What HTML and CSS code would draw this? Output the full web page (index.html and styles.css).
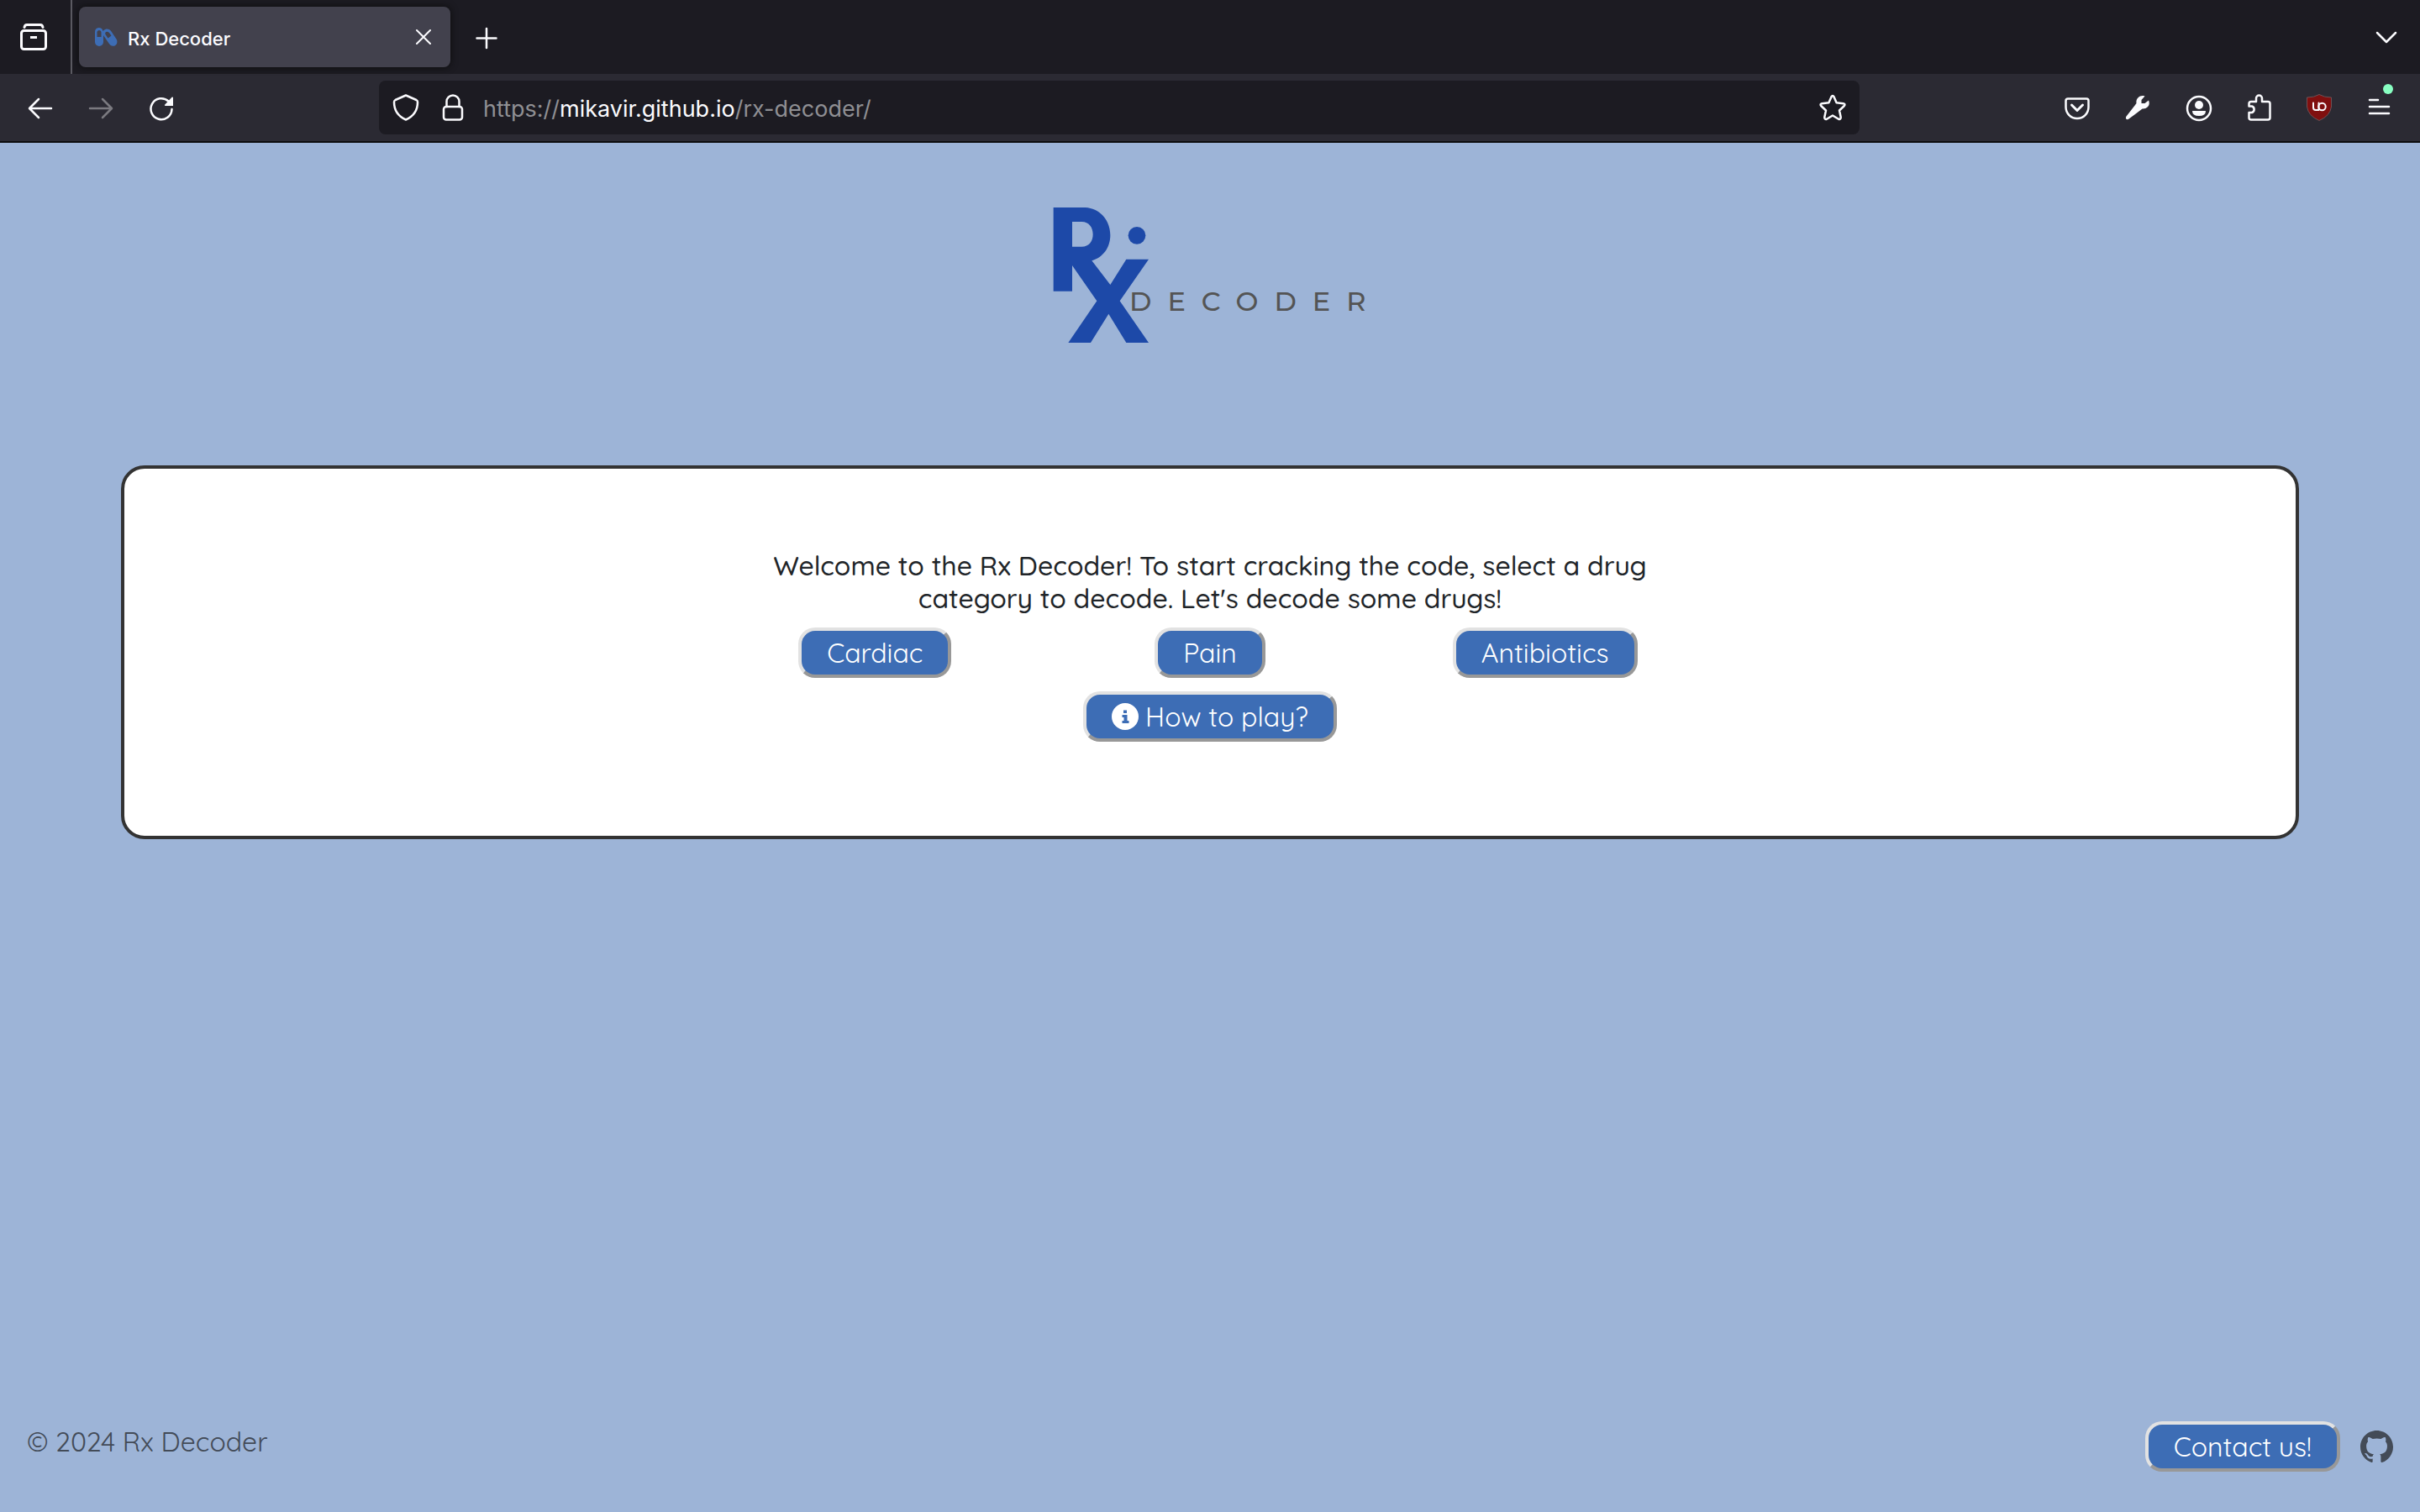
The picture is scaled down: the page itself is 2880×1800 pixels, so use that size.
FILE: index.html
```html
<!DOCTYPE html>
<html lang="en">
<head>
<meta charset="utf-8">
<meta name="viewport" content="width=device-width, initial-scale=1">
<title>Rx Decoder</title>
<link rel="stylesheet" href="styles.css">
</head>
<body>
<div class="browser">
  <div class="tabbar">
    <button class="tool recent" aria-label="Recent browsing">
      <svg class="icon" viewBox="0 0 32 32"><path d="M5 4.5Q5.500 1.500 8 1.500H24Q26.500 1.500 27 4.500" class="line heavy"/><rect x="1.500" y="8.500" width="29" height="22" rx="3" class="line heavy"/><path d="M12 16.500H20" class="line heavy butt"/></svg>
    </button>
    <div class="tab">
      <svg class="favicon" viewBox="0 0 28 24"><path fill-rule="evenodd" d="M5.500 1A5 5 0 0 1 10.500 5L11.500 4C14 1.500 18.500 2 20.500 5.500L26.500 14.500C28.500 18 27 21.500 24.500 22.500C21.500 23.500 19 22 17.500 19.500L11 10V18A5 5 0 0 1 1 18V6A5 5 0 0 1 5.500 1ZM3.500 6.500V12H8.500V6.500C8.500 3 3.500 3 3.500 6.500ZM13.500 9L16.500 13.500L20.500 10.500L18 7C15.500 4.500 12 6.500 13.500 9Z"/></svg>
      <span class="tab-title">Rx Decoder</span>
      <button class="close" aria-label="Close tab"><svg viewBox="0 0 20 20"><path d="M2 2L18 18M18 2L2 18" class="line"/></svg></button>
    </div>
    <button class="tool" aria-label="New tab"><svg class="icon" viewBox="0 0 32 32"><path d="M15 6V29M3.500 17.500H26.500" class="line thick"/></svg></button>
    <button class="tool list-tabs" aria-label="List all tabs"><svg class="icon" viewBox="0 0 32 32"><path d="M5 11L16 22L27 11" class="line thick"/></svg></button>
  </div>
  <div class="navbar">
    <div class="nav-left">
      <button class="tool" aria-label="Back"><svg class="icon" viewBox="0 0 32 32"><path d="M29 17H4M14 6L3 17L14 28" class="line thick"/></svg></button>
      <button class="tool" aria-label="Forward" disabled><svg class="icon" viewBox="0 0 32 32"><path d="M3 17H28M18 6L29 17L18 28" class="line thick"/></svg></button>
      <button class="tool" aria-label="Reload"><svg class="icon" viewBox="0 0 32 32"><path d="M28.500 18A12.500 12.500 0 1 1 24.500 8.500" class="line thick"/><path d="M30 4V14H20.500Q19.500 13.500 20.300 12.500L28.500 3.800Q29.500 3 30 4Z" class="solid"/></svg></button>
    </div>
    <div class="urlbar">
      <svg class="icon" viewBox="0 0 32 32"><path d="M16 1.500L28.500 7Q30 7.800 30 9.500C30 19 25 26.500 16 30.500C7 26.500 2 19 2 9.500Q2 7.800 3.500 7Z" class="line thick"/></svg>
      <svg class="icon" viewBox="0 0 32 32"><rect x="5" y="15" width="22" height="15.500" rx="3" class="line thick"/><path d="M8.500 15V9A7.500 7.500 0 0 1 23.500 9V15" class="line thick"/></svg>
      <div class="url" role="textbox" aria-label="Address" contenteditable="true" spellcheck="false">https://<span class="host">mikavir.github.io</span>/rx-decoder/</div>
      <button class="star" aria-label="Bookmark this page"><svg class="icon" viewBox="0 0 32 32"><path d="M14.600 3Q16 .8 17.400 3L20.600 10.300L28.800 11.200Q31.500 11.800 29.800 14L24 19.500L25.700 27.500Q25.800 30.500 23 29.800L16 25.500L9 29.800Q6.200 30.500 6.300 27.500L8 19.500L2.200 14Q.5 11.800 3.200 11.200L11.400 10.300Z" class="line thick"/></svg></button>
    </div>
    <div class="nav-right">
      <button class="tool" aria-label="Save to Pocket"><svg class="icon" viewBox="0 0 32 32"><path d="M5 5.500H27Q29.500 5.500 29.500 8V15.500A13.500 13.500 0 0 1 2.500 15.500V8Q2.500 5.500 5 5.500Z" class="line thick"/><path d="M9.500 13L16 19.500L22.500 13" class="line heavy"/></svg></button>
      <button class="tool" aria-label="Developer tools"><svg class="icon" viewBox="0 0 32 32"><path d="M24.500 2.500L20.500 7V11H24.500L29 7.500C31.500 13 27.500 18 21.500 17.500L5.500 29.500C3 31.500 .8 29 2.500 26.500L14.500 11C13.500 5 19 .5 24.500 2.500Z" class="solid"/></svg></button>
      <button class="tool" aria-label="Account"><svg class="icon" viewBox="0 0 32 32"><circle cx="17" cy="17" r="14" class="line thick"/><circle cx="17" cy="13" r="5" class="solid"/><path d="M9 20H25Q25 26 17 26Q9 26 9 20Z" class="solid"/></svg></button>
      <button class="tool" aria-label="Extensions"><svg class="icon" viewBox="0 0 32 32"><path d="M13 9V5A3.500 3.500 0 0 1 20 5V9H27Q29.500 9 29.500 11.500V28Q29.500 30.500 27 30.500H7Q4.500 30.500 4.500 28V22H8A4 4 0 0 0 8 14.500H4.500V11.500Q4.500 9 7 9Z" class="line thick"/></svg></button>
      <button class="tool" aria-label="uBlock Origin"><svg class="icon" viewBox="0 0 32 32"><path d="M16 .5Q22 4 30.500 4V15Q29 26 16 31.500Q3 26 1.500 15V4Q10 4 16 .5Z" class="ublock"/><path d="M9 10.500V16Q9 19 12 19H15.500V10.500" class="line"/><circle cx="19.500" cy="15" r="4.200" class="line"/></svg></button>
      <button class="tool menu" aria-label="Open application menu"><svg class="icon" viewBox="0 0 32 32"><path d="M4 7H14M4 15H27M4 23H27" class="line thick"/></svg><span class="badge"></span></button>
    </div>
  </div>
</div>
<header class="site-header">
  <a href="#" class="logo" aria-label="Rx Decoder">
    <svg viewBox="0 0 440 210"><g transform="scale(.33333)"><path class="mark" fill-rule="evenodd" d="M101 81H215C270 84 304 130 304 180C304 225 277 260 238 271L304 357L361 266H441L338 415L441 564H361L298 461L234 564H154L256 415L168 288V380H101ZM168 132H202C228 132 242 152 242 177C242 202 228 221 202 221H168Z"/><circle class="mark" cx="399" cy="181" r="31"/></g><text x="124" y="150" class="wordmark">DECODER</text></svg>
  </a>
</header>
<main class="card">
  <div class="content">
    <p class="intro">Welcome to the Rx Decoder! To start cracking the code, select a drug category to decode. Let's decode some drugs!</p>
    <div class="categories">
      <button class="btn">Cardiac</button>
      <button class="btn">Pain</button>
      <button class="btn">Antibiotics</button>
    </div>
    <button class="btn help"><svg class="info" viewBox="0 0 32 32"><path fill-rule="evenodd" d="M16 0A16 16 0 1 1 16 32A16 16 0 0 1 16 0ZM14 8.500V12H18V8.500ZM12.500 14V17H14.500V21H12.500V24H20.500V21H18.500V14Z"/></svg>How to play?</button>
  </div>
</main>
<footer class="site-footer">
  <p class="copyright">© 2024 Rx Decoder</p>
  <button class="btn">Contact us!</button>
  <a href="#" class="github" aria-label="GitHub"><svg viewBox="0 0 16 16"><path d="M8 0C3.580 0 0 3.580 0 8c0 3.540 2.290 6.530 5.470 7.590.4.070.55-.17.55-.38 0-.19-.01-.82-.01-1.490-2.010.37-2.530-.49-2.690-.94-.09-.23-.48-.94-.82-1.130-.28-.15-.68-.52-.01-.53.63-.01 1.080.58 1.230.82.72 1.210 1.870.87 2.330.66.07-.52.28-.87.51-1.070-1.780-.2-3.640-.89-3.640-3.950 0-.87.31-1.590.82-2.150-.08-.2-.36-1.020.08-2.120 0 0 .67-.21 2.200.82.64-.18 1.320-.27 2-.27s1.360.09 2 .27c1.530-1.040 2.200-.82 2.200-.82.44 1.100.16 1.920.08 2.120.51.56.82 1.270.82 2.150 0 3.070-1.870 3.750-3.650 3.950.29.25.54.73.54 1.480 0 1.070-.01 1.930-.01 2.200 0 .21.15.46.55.38A8.010 8.010 0 0 0 16 8c0-4.420-3.580-8-8-8z"/></svg></a>
</footer>
</body>
</html>
```
FILE: styles.css
```css
* {
  box-sizing: border-box;
}

body {
  margin: 0;
  min-height: 100vh;
  display: flex;
  flex-direction: column;
  background: #9db4d7;
  color: #212529;
  font-family: Quicksand, Lato, sans-serif;
  font-size: 32px;
  line-height: 39px;
}

button {
  font: inherit;
  cursor: pointer;
}

svg {
  display: block;
  overflow: visible;
}

/* Browser chrome */

.browser {
  font-family: Inter, sans-serif;
  color: #fbfbfe;
  border-bottom: 2px solid #0c0c0d;
}

.tabbar {
  display: flex;
  align-items: center;
  height: 88px;
  background: #1c1b22;
}

.tool,
.close,
.star {
  display: flex;
  align-items: center;
  justify-content: center;
  padding: 0;
  border: 0;
  background: none;
  color: inherit;
}

.tool {
  width: 72px;
  height: 72px;
}

.tool:disabled {
  color: #7b7a80;
}

.icon {
  width: 32px;
  height: 32px;
}

.line {
  fill: none;
  stroke: currentColor;
  stroke-width: 2;
  stroke-linecap: round;
  stroke-linejoin: round;
}

.thick {
  stroke-width: 2.500;
}

.heavy {
  stroke-width: 3;
}

.butt {
  stroke-linecap: butt;
}

.solid {
  fill: currentColor;
}

.recent {
  width: 86px;
  height: 100%;
  padding-right: 4px;
  border-right: 2px solid #5b5a62;
}

.tab {
  display: flex;
  align-items: center;
  width: 442px;
  height: 72px;
  margin: 0 8px;
  padding: 0 16px 0 18px;
  border-radius: 8px;
  background: #42414d;
  box-shadow: 0 0 8px #0c0c0d;
}

.favicon {
  width: 28px;
  height: 24px;
  fill: #3d6db5;
}

.tab-title {
  flex: 1;
  margin-left: 12px;
  padding-top: 4px;
  font-size: 22px;
  font-weight: 500;
}

.close {
  width: 32px;
  height: 32px;
}

.close svg {
  width: 20px;
  height: 20px;
}

.list-tabs {
  margin-left: auto;
  margin-right: 4px;
}

.navbar {
  display: grid;
  grid-template-columns: 451px 1fr 667px;
  align-items: center;
  height: 80px;
  background: #2b2a33;
}

.nav-left,
.nav-right {
  display: flex;
}

.nav-left {
  padding-left: 12px;
}

.nav-right {
  justify-content: flex-end;
  padding-right: 12px;
}

.urlbar {
  display: flex;
  align-items: center;
  gap: 24px;
  height: 64px;
  padding: 0 16px;
  border-radius: 8px;
  background: #1c1b22;
}

.url {
  flex: 1;
  margin-left: -4px;
  padding-top: 2px;
  color: #8f8f93;
  font-size: 27px;
  outline: 0;
}

.host {
  color: #fbfbfe;
}

.ublock {
  fill: #800f0f;
  stroke: #6e5055;
}

.menu {
  position: relative;
}

.badge {
  position: absolute;
  top: 8px;
  right: 20px;
  width: 12px;
  height: 12px;
  border-radius: 50%;
  background: #88ffc2;
}

/* Page */

.site-header {
  display: flex;
  justify-content: center;
  padding: 50px 0 124px;
}

.logo svg {
  width: 440px;
  height: 210px;
}

.mark {
  fill: #1d49a8;
}

.wordmark {
  fill: #545454;
  font-family: Montserrat, Lato, sans-serif;
  font-size: 32px;
  font-weight: 500;
  letter-spacing: 19px;
}

.card {
  width: 90%;
  margin: 0 auto;
  padding: 96px 0 112px;
  border: 4px solid #333;
  border-radius: 28px;
  background: #fff;
}

.content {
  display: flex;
  flex-direction: column;
  align-items: center;
  gap: 16px;
  max-width: 1196px;
  margin: 0 auto;
}

.intro {
  margin: 0 0 -1px;
  padding: 0 48px;
  text-align: center;
  font-weight: 500;
}

.categories {
  display: grid;
  grid-template-columns: repeat(3, 1fr);
  justify-items: center;
  width: 100%;
}

.btn {
  display: flex;
  align-items: center;
  height: 60px;
  padding: 0 30px;
  border: 4px solid;
  border-color: #e2e2e2 #989898 #989898 #e2e2e2;
  border-radius: 20px;
  background: #3d6db5;
  color: #fff;
}

.info {
  width: 32px;
  height: 32px;
  margin-right: 8px;
  fill: #fff;
}

.site-footer {
  display: flex;
  align-items: center;
  gap: 24px;
  margin-top: auto;
  padding: 0 32px 48px;
  color: #434b57;
}

.copyright {
  margin: 0 auto 12px 0;
}

.github svg {
  width: 39px;
  height: 39px;
  fill: #434b57;
}
```
